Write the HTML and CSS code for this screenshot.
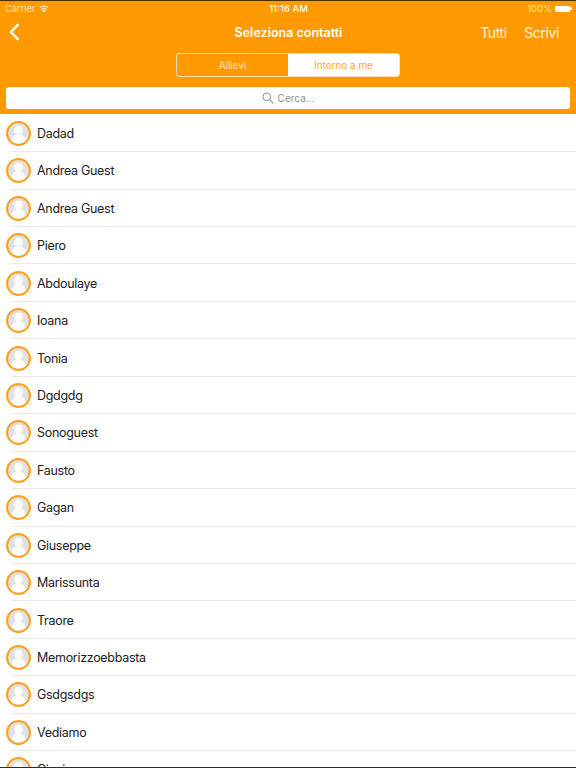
FILE: index.html
```html
<!DOCTYPE html>
<html lang="it">
<head>
<meta charset="utf-8">
<title>Seleziona contatti</title>
<link rel="stylesheet" href="styles.css">
</head>
<body>
<div class="screen">
<header class="top">
  <div class="status">
    <div class="status-left"><span>Carrier</span>
      <svg class="wifi" width="10" height="8" viewBox="0 0 12 9"><path d="M6 8.600 8 6.300a3 3 0 0 0-4 0Z" fill="#fff"/><path d="M.8 3.100a7.600 7.600 0 0 1 10.400 0M2.600 5a5 5 0 0 1 6.800 0" fill="none" stroke="#fff" stroke-width="1.200"/></svg>
    </div>
    <div class="status-time">11:16 AM</div>
    <div class="status-right"><span>100%</span>
      <span class="battery"></span><span class="battery-tip"></span>
    </div>
  </div>
  <div class="nav">
    <svg class="back" width="12" height="18" viewBox="0 0 12 18"><path d="M10.500 1.200 3 9l7.500 7.800" fill="none" stroke="#fff" stroke-width="2.400"/></svg>
    <div class="title">Seleziona contatti</div>
    <div class="actions"><span>Tutti</span><span>Scrivi</span></div>
  </div>
  <div class="segments">
    <div class="seg seg-off">Allievi</div>
    <div class="seg seg-on">Intorno a me</div>
  </div>
  <div class="search">
    <svg width="12" height="12" viewBox="0 0 12 12"><circle cx="4.800" cy="4.800" r="3.900" fill="none" stroke="#8e8e93" stroke-width="1"/><path d="M7.600 7.600 11.300 11.300" stroke="#8e8e93" stroke-width="1.200"/></svg>
    <span>Cerca...</span>
  </div>
</header>
<ul class="list">
  <li class="row"><svg class="avatar"><use href="#av"/></svg><span class="name">Dadad</span></li>
  <li class="row"><svg class="avatar"><use href="#av"/></svg><span class="name">Andrea Guest</span></li>
  <li class="row"><svg class="avatar"><use href="#av"/></svg><span class="name">Andrea Guest</span></li>
  <li class="row"><svg class="avatar"><use href="#av"/></svg><span class="name">Piero</span></li>
  <li class="row"><svg class="avatar"><use href="#av"/></svg><span class="name">Abdoulaye</span></li>
  <li class="row"><svg class="avatar"><use href="#av"/></svg><span class="name">Ioana</span></li>
  <li class="row"><svg class="avatar"><use href="#av"/></svg><span class="name">Tonia</span></li>
  <li class="row"><svg class="avatar"><use href="#av"/></svg><span class="name">Dgdgdg</span></li>
  <li class="row"><svg class="avatar"><use href="#av"/></svg><span class="name">Sonoguest</span></li>
  <li class="row"><svg class="avatar"><use href="#av"/></svg><span class="name">Fausto</span></li>
  <li class="row"><svg class="avatar"><use href="#av"/></svg><span class="name">Gagan</span></li>
  <li class="row"><svg class="avatar"><use href="#av"/></svg><span class="name">Giuseppe</span></li>
  <li class="row"><svg class="avatar"><use href="#av"/></svg><span class="name">Marissunta</span></li>
  <li class="row"><svg class="avatar"><use href="#av"/></svg><span class="name">Traore</span></li>
  <li class="row"><svg class="avatar"><use href="#av"/></svg><span class="name">Memorizzoebbasta</span></li>
  <li class="row"><svg class="avatar"><use href="#av"/></svg><span class="name">Gsdgsdgs</span></li>
  <li class="row"><svg class="avatar"><use href="#av"/></svg><span class="name">Vediamo</span></li>
  <li class="row"><svg class="avatar"><use href="#av"/></svg><span class="name">Cinzia</span></li>
</ul>
</div>
<svg class="defs" width="0" height="0">
  <symbol id="av" viewBox="0 0 24 24">
    <circle cx="12" cy="12" r="11" fill="#e1e1e3" stroke="#ff9f1a" stroke-width="1.900"/>
    <circle cx="12" cy="8.800" r="4.200" fill="#fff"/>
    <path d="M5.400 19.200c0-4.500 3-6.200 6.600-6.200s6.600 1.700 6.600 6.200c-1.700 1.500-4 2.400-6.600 2.400s-4.900-.9-6.600-2.400Z" fill="#fff"/>
  </symbol>
</svg>
</body>
</html>
```
FILE: styles.css
```css
* { box-sizing: border-box; }
html, body { margin: 0; padding: 0; }
body { font-family: "Inter", "Liberation Sans", sans-serif; background: #fff; }
.screen { width: 576px; height: 768px; overflow: hidden; display: flex; flex-direction: column; border-bottom: 1px solid #2b2b2b; }
.top { flex: none; height: 114px; background: #ff9900; border-top: 1px solid #4a3000; color: #fff; display: flex; flex-direction: column; }
.status { height: 15px; display: flex; align-items: center; justify-content: space-between; padding: 0 4px 0 5px; font-size: 9.500px; position: relative; }
.status-left, .status-right { display: flex; align-items: center; gap: 4px; letter-spacing: -0.1px; }
.status-left { color: #ffe0b0; }
.status-right { gap: 3px; color: #ffe0b0; }
.status-time { font-weight: 500; position: absolute; left: 1px; right: 0; text-align: center; }
.battery { width: 15px; height: 6px; background: #fff; border-radius: 1px; }
.battery-tip { width: 2px; height: 3px; background: #fff; margin-left: -3px; }
.nav { height: 32px; display: flex; align-items: center; position: relative; padding: 0 10px 0 8px; }
.title { position: absolute; left: 1px; right: 0; text-align: center; font-size: 12.500px; font-weight: 600; }
.actions { margin-left: auto; display: flex; gap: 17.500px; font-size: 14px; letter-spacing: -0.4px; padding-right: 7px; position: relative; color: #fff2dd; }
.segments { display: flex; width: 224px; height: 24px; margin: 5px auto 0; border-radius: 3px; overflow: hidden; border: 1px solid #ffe0b0; font-size: 10px; letter-spacing: -0.05px; }
.seg { flex: 1; display: flex; align-items: center; justify-content: center; }
.seg-off { color: #ffe0b0; }
.seg-on { background: #fff; color: #ffa826; }
.search { margin: 10px 6px 0; height: 21.500px; padding-top: 1px; background: #fff; border-radius: 3px; display: flex; align-items: center; justify-content: center; gap: 4px; font-size: 10px; color: #8e8e93; }
.list { list-style: none; margin: 0; padding: 0.700px 0 0; flex: none; }
.row { height: 37.450px; display: flex; align-items: center; padding-left: 6px; position: relative; }
.row::after { content: ""; position: absolute; left: 12px; right: 0; bottom: 0; height: 1px; background: #e8e8e8; }
.avatar { width: 25px; height: 25px; flex: none; }
.name { margin-left: 6px; font-size: 12.500px; letter-spacing: -0.3px; color: #222; }
.defs { position: absolute; }
```
